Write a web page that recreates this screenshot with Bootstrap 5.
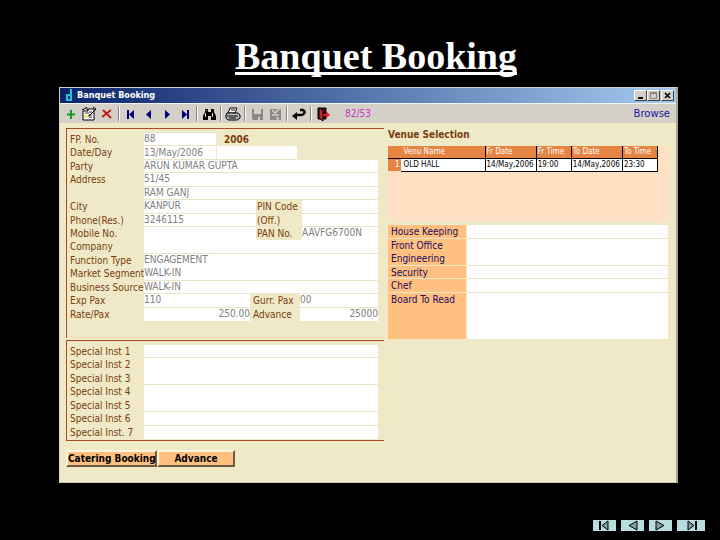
<!DOCTYPE html>
<html lang="en">
<head>
<meta charset="utf-8">
<meta name="viewport" content="width=device-width, initial-scale=1">
<title>Banquet Booking</title>
<link href="https://cdn.jsdelivr.net/npm/bootstrap@5.3.0/dist/css/bootstrap.min.css" rel="stylesheet">
<style>
body{background:#000;font:10px/13px "DejaVu Sans Condensed","Noto Sans",sans-serif}
.slide-title{font:bold 38px/48px "Liberation Serif",serif;text-decoration:underline;text-decoration-thickness:3px;text-decoration-skip-ink:none;text-underline-offset:3px;padding:32px 0 7px 32px}
.stage{padding-left:59px;padding-right:42px}
.win{background:#f0e9c8;border:1px solid #d4d0c8;border-right:2px solid #a9a593;border-bottom-color:#c9c5b0}
.win-head{height:15px;background:linear-gradient(90deg,#0a246a,#a6caf0);color:#fff;font-size:9px;padding:0 2px 0 6px}
.win-head button{width:13px;height:11px;background:#d4d0c8;border:1px solid;border-color:#fff #404040 #404040 #fff}
.win-head button:last-child{margin-left:1px}
.tools{height:20px;background:#d4d0c8;border-top:1px solid #f4f2ee;padding:0 6px 0 2px}
.tool{width:18px;height:17px}
.tool svg,.win-head svg,.slide-nav svg{display:block;margin:auto}
.divider{width:2px;height:15px;margin:0 2px;background:linear-gradient(90deg,#85827c 50%,#fff 50%)}
.counter{color:#c938c9;margin-left:13px}
.tools a{color:#1a1a9c;font:10px/13px "DejaVu Sans",sans-serif}
.panes{display:grid;grid-template-columns:minmax(0,318fr) minmax(0,281fr);column-gap:4px;padding:5px 7px 15px 6px}
.group{border:1px solid #a84a22;border-right:0;padding:4px 6px 1px 3px;color:#7a3c0c}
.guest{border-bottom-color:#fbd9b0;padding-bottom:16px;margin-bottom:2px}
.lines{display:grid;grid-template-columns:minmax(0,1fr);grid-auto-rows:1fr}
.main-lines{height:188px}
.inst-lines{height:94px}
.line{display:flex;min-height:0}
.line>label{flex:0 0 74px;white-space:nowrap}
.line>label.mid{flex-basis:46px;padding-left:1px}
.line>label.pax{flex-basis:50px;padding-left:3px}
.line input{flex:1 1 0;min-width:0;border:0;border-bottom:1px solid #ece6c8;border-radius:0;background:#fff;color:#808080;padding:0;font:inherit;line-height:12px}
.line.joined input{border-bottom-color:transparent}
.line input.short{flex:0 0 72px}
.line input.day{flex:0 0 80px;margin-left:1px}
.line input.left{flex:0 0 112px}
.line input.leftpax{flex:0 0 106px}
.year{font-weight:bold;padding-left:8px}
.heading{font:bold 10px/13px "DejaVu Sans Condensed",sans-serif;color:#7a3c0c;margin-bottom:5px}
.venue{background:#ffe0c2;height:75px;padding-right:11px}
.venue table{width:100%;table-layout:fixed;font-size:8px;line-height:11px}
.venue th{background:#e58443;color:#fff;font-weight:normal}
.venue td{background:#fff;color:#000}
.venue th,.venue td{border:1px solid #000;padding:0 0 0 1px;overflow:hidden;white-space:nowrap}
.venue thead th{border-top:0;height:12px}
.venue td{height:13px}
.venue th:first-child{border-left:0;border-right:0;border-bottom:0;text-align:right;padding-right:2px}
.venue th:nth-child(2),.venue td:nth-child(2){border-left:0;padding-left:2px}
.staff{display:grid;grid-template-columns:78px minmax(0,1fr);grid-template-rows:repeat(5,minmax(13px,1fr)) 46px;height:114px;margin-right:1px}
.staff .tag{background:#ffc080;color:#230a5c;padding-left:3px;border-bottom:1px solid #f0e9c8;white-space:nowrap}
.staff input{border:0;border-bottom:1px solid #ece6c8;border-left:1px solid #f0e9c8;background:#fff;min-width:0;padding:0;font:inherit}
.staff .open{border-bottom-color:transparent}
.actions{margin-top:9px}
.cmd{background:#ffc080;border:2px solid;border-color:#fff4dc #6b5a45 #6b5a45 #fff4dc;height:17px;font-weight:bold;line-height:12px;padding:0;color:#000;width:78px;white-space:nowrap}
.cmd.wide{width:91px}
.slide-nav{gap:5px;padding:0 15px 9px}
.slide-nav button{width:23px;height:11px;background:#b9dcdc;border:0;padding:0}
.slide-nav button:last-child{width:28px}
</style>
<script src="https://cdn.jsdelivr.net/npm/bootstrap@5.3.0/dist/js/bootstrap.bundle.min.js"></script>
</head>
<body class="min-vh-100 d-flex flex-column">
<h1 class="slide-title text-white text-center m-0">Banquet Booking</h1>
<main class="stage">
<section class="win">
<header class="win-head d-flex align-items-center">
<svg class="m-0 me-1" width="7" height="13" viewBox="0 0 7 13" fill="none" stroke="#27c3dc" stroke-width="2"><path d="M5 0V12M5 6H1V11H5"/></svg>
<strong class="me-auto">Banquet Booking</strong>
<button class="p-0" aria-label="Minimize"><svg width="9" height="9"><path d="M2 7H7" stroke="#000" stroke-width="2"/></svg></button>
<button class="p-0" aria-label="Maximize"><svg width="9" height="9"><path d="M1.500 1.500H7.500V7.500H1.500ZM1 2.500H8" stroke="#858585" fill="none"/></svg></button>
<button class="p-0" aria-label="Close"><svg width="9" height="9"><path d="M2 2L7 7M7 2L2 7" stroke="#000" stroke-width="1.500"/></svg></button>
</header>
<div class="tools d-flex align-items-center">
<button class="tool border-0 bg-transparent p-0" aria-label="Add"><svg width="16" height="16"><path d="M8 4V13M4 8.500H12" stroke="#149a20" stroke-width="2"/></svg></button>
<button class="tool border-0 bg-transparent p-0" aria-label="Edit"><svg width="16" height="16"><path d="M2 5H7V3H13V14H2Z" fill="#fff" stroke="#000"/><path d="M4 7H8M8 6H11M8 9H11M8 11H11" stroke="#333"/><path d="M3 9H7V12H3Z" fill="#f4e58a"/><path d="M1 4L5 2M5 1L7 4M12 1L15 3L9 9L7 10" fill="none" stroke="#000"/></svg></button>
<button class="tool border-0 bg-transparent p-0" aria-label="Delete"><svg width="16" height="16"><path d="M4 4L12 12M12 4L3 11" stroke="#c81414" stroke-width="1.800"/></svg></button>
<span class="divider"></span>
<button class="tool border-0 bg-transparent p-0" aria-label="First"><svg width="16" height="16" fill="#00007c"><path d="M4 4H6V13H4ZM11 4V13L6 8.500Z"/></svg></button>
<button class="tool border-0 bg-transparent p-0" aria-label="Previous"><svg width="16" height="16" fill="#00007c"><path d="M10 4V13L5 8.500Z"/></svg></button>
<button class="tool border-0 bg-transparent p-0" aria-label="Next"><svg width="16" height="16" fill="#00007c"><path d="M6 4V13L11 8.500Z"/></svg></button>
<button class="tool border-0 bg-transparent p-0" aria-label="Last"><svg width="16" height="16" fill="#00007c"><path d="M5 4V13L10 8.500ZM10 4H12V13H10Z"/></svg></button>
<span class="divider"></span>
<button class="tool border-0 bg-transparent p-0" aria-label="Find"><svg width="16" height="16"><path d="M4 3H7V6H10V3H13V6L15 10V14H10V10H7V14H2V10L4 6Z" fill="#000"/><path d="M4.500 7V11M11.500 7V11M5 4V5" stroke="#ddd"/></svg></button>
<span class="divider"></span>
<button class="tool border-0 bg-transparent p-0" aria-label="Print"><svg width="16" height="16"><path d="M5 2H12L10 7H3Z" fill="#fff" stroke="#000"/><path d="M2 7H13L15 9V12L12 14H3L1 12V9Z" fill="#bbb" stroke="#000"/><path d="M2 10H13M4 12H11M6 4H10" stroke="#000"/></svg></button>
<span class="divider"></span>
<button class="tool border-0 bg-transparent p-0" aria-label="Save"><svg width="16" height="16"><path d="M3 3H14V14H4L3 13Z" fill="#898989"/><path d="M5 3H12V8H5ZM9 11H11V14H9Z" fill="#d4d0c8"/></svg></button>
<button class="tool border-0 bg-transparent p-0" aria-label="Save and close"><svg width="16" height="16"><path d="M3 3H14V14H4L3 13Z" fill="#898989"/><path d="M5 4L8 7L12 3M5 9H12M9 12H11V14" stroke="#d4d0c8" stroke-width="1.500" fill="none"/></svg></button>
<span class="divider"></span>
<button class="tool border-0 bg-transparent p-0" aria-label="Undo"><svg width="16" height="16"><path d="M9 4H12C15 6 13 9 10 9H5" stroke="#000" stroke-width="2.500" fill="none"/><path d="M1 10L6 6V14Z"/></svg></button>
<span class="divider"></span>
<button class="tool border-0 bg-transparent p-0" aria-label="Exit"><svg width="16" height="16"><path d="M3 2H11V13H3Z" fill="#4d1515" stroke="#000"/><path d="M4 2L8 4V15L4 12Z" fill="#a33" stroke="#000"/><path d="M8 8H11V5L15 9L11 12V10H8Z" fill="#e02020"/></svg></button>
<span class="counter me-auto">82/53</span>
<a class="text-decoration-none" href="#">Browse</a>
</div>
<div class="panes">
<div>
<div class="group guest">
<div class="lines main-lines">
<div class="line"><label for="fp">FP. No.</label><input class="short" id="fp" value="88"><span class="year">2006</span></div>
<div class="line"><label for="dt">Date/Day</label><input class="short" id="dt" value="13/May/2006"><input class="day" aria-label="Day"></div>
<div class="line"><label for="party">Party</label><input id="party" value="ARUN KUMAR GUPTA"></div>
<div class="line"><label for="ad">Address</label><input id="ad" value="51/45"></div>
<div class="line"><label for="ad2" aria-label="Address line 2"></label><input id="ad2" value="RAM GANJ"></div>
<div class="line"><label for="city">City</label><input class="left" id="city" value="KANPUR"><label class="mid" for="pin">PIN Code</label><input id="pin"></div>
<div class="line"><label for="ph">Phone(Res.)</label><input class="left" id="ph" value="3246115"><label class="mid" for="off">(Off.)</label><input id="off"></div>
<div class="line joined"><label for="mob">Mobile No.</label><input class="left" id="mob"><label class="mid" for="pan">PAN No.</label><input id="pan" value="AAVFG6700N"></div>
<div class="line"><label for="co">Company</label><input id="co"></div>
<div class="line joined"><label for="fn">Function Type</label><input id="fn" value="ENGAGEMENT"></div>
<div class="line"><label for="mk">Market Segment</label><input id="mk" value="WALK-IN"></div>
<div class="line"><label for="bs">Business Source</label><input id="bs" value="WALK-IN"></div>
<div class="line"><label for="ep">Exp Pax</label><input class="leftpax" id="ep" value="110"><label class="pax" for="gp">Gurr. Pax</label><input id="gp" value="00"></div>
<div class="line joined"><label for="rate">Rate/Pax</label><input class="leftpax text-end" id="rate" value="250.00"><label class="pax" for="adv">Advance</label><input class="text-end" id="adv" value="25000"></div>
</div>
</div>
<div class="group">
<div class="lines inst-lines">
<div class="line"><label for="s1">Special Inst 1</label><input id="s1"></div>
<div class="line joined"><label for="s2">Special Inst 2</label><input id="s2"></div>
<div class="line"><label for="s3">Special Inst 3</label><input id="s3"></div>
<div class="line joined"><label for="s4">Special Inst 4</label><input id="s4"></div>
<div class="line"><label for="s5">Special Inst 5</label><input id="s5"></div>
<div class="line"><label for="s6">Special Inst 6</label><input id="s6"></div>
<div class="line joined"><label for="s7">Special Inst. 7</label><input id="s7"></div>
</div>
</div>
<div class="actions d-flex"><button class="cmd wide">Catering Booking</button><button class="cmd">Advance</button></div>
</div>
<div>
<h2 class="heading">Venue Selection</h2>
<div class="venue mb-1">
<table>
<colgroup><col style="width:5%"><col style="width:31%"><col style="width:19%"><col style="width:13%"><col style="width:19%"><col style="width:13%"></colgroup>
<thead><tr><th></th><th>Venu Name</th><th>Fr Date</th><th>Fr Time</th><th>To Date</th><th>To Time</th></tr></thead>
<tbody><tr><th scope="row">1</th><td>OLD HALL</td><td>14/May,2006</td><td>19:00</td><td>14/May,2006</td><td>23:30</td></tr></tbody>
</table>
</div>
<div class="staff">
<label class="tag" for="hk">House Keeping</label><input id="hk">
<label class="tag open" for="fo">Front Office</label><input class="open" id="fo">
<label class="tag" for="en">Engineering</label><input id="en">
<label class="tag" for="se">Security</label><input id="se">
<label class="tag" for="ch">Chef</label><input id="ch">
<label class="tag open" for="br">Board To Read</label><input class="open" id="br">
</div>
</div>
</div>
</section>
</main>
<nav class="slide-nav d-flex justify-content-end mt-auto" aria-label="Slides">
<button aria-label="First slide"><svg width="13" height="11"><path d="M2 1V10" stroke="#000" stroke-width="2"/><path d="M10 1V10L4 5.500Z" fill="#819c9c" stroke="#000"/></svg></button>
<button aria-label="Previous slide"><svg width="13" height="11"><path d="M11 1V10L3 5.500Z" fill="#819c9c" stroke="#000"/></svg></button>
<button aria-label="Next slide"><svg width="13" height="11"><path d="M2 1V10L10 5.500Z" fill="#819c9c" stroke="#000"/></svg></button>
<button aria-label="Last slide"><svg width="13" height="11"><path d="M3 1V10L9 5.500Z" fill="#819c9c" stroke="#000"/><path d="M11 1V10" stroke="#000" stroke-width="2"/></svg></button>
</nav>
</body>
</html>
